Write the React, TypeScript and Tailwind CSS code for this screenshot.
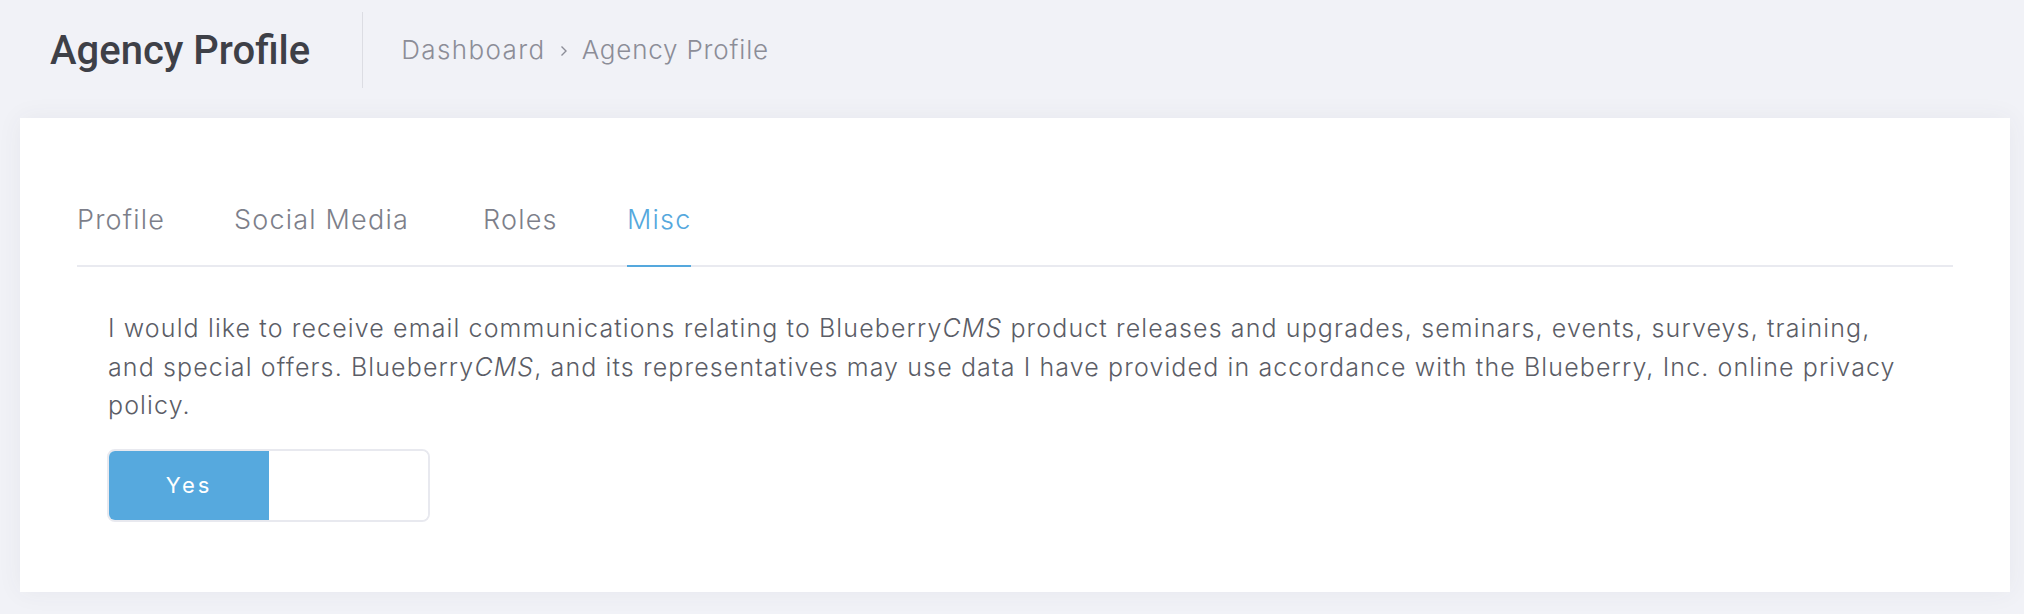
import React from "react";

const poppins = { fontFamily: "Inter, 'Open Sans', sans-serif" } as const;

export default function App() {
  return (
    <div className="min-h-[614px] w-[2024px] bg-[#f1f2f7] overflow-hidden" style={poppins}>
      <header className="h-[100px] flex items-center pl-[50px]">
        <h1 className="text-[40px] leading-[47px] font-medium text-[#3e4047]" style={{ fontFamily: "Roboto, 'Liberation Sans', sans-serif" }}>
          Agency Profile
        </h1>
        <div className="ml-[52px] w-px h-[76px] bg-[#dcdde3]" />
        <nav className="ml-[38px] flex items-center text-[26px] leading-[32px] font-light text-[#8c8d97] tracking-[0.8px]">
          <span className="tracking-[1.4px]">Dashboard</span>
          <svg className="mx-[14px] mt-[2px]" width="8" height="12" viewBox="0 0 8 12" fill="none">
            <path d="M1.5 1.5 L6 6 L1.5 10.5" stroke="#8c8d97" strokeWidth="1.4" />
          </svg>
          <span>Agency Profile</span>
        </nav>
      </header>
      <main className="ml-[20px] mt-[18px] w-[1990px] h-[474px] bg-white shadow-[0_0_24px_rgba(60,64,90,0.06)] pt-[84px] px-[57px]">
        <div className="flex border-b-2 border-[#e9eaf0] text-[27px] leading-[36px] font-light text-[#7d7f8a] tracking-[1.2px]">
          <div className="w-[157px] pb-[27px]">Profile</div>
          <div className="w-[249px] pb-[27px]">Social Media</div>
          <div className="w-[144px] pb-[27px]">Roles</div>
          <div className="pb-[27px] -mb-[2px] border-b-2 border-[#55a8dd] text-[#55a8dd]">Misc</div>
        </div>
        <p className="mt-[42px] ml-[31px] text-[25px] leading-[38.5px] font-light text-[#5b5d66] tracking-[1.12px]">
          I would like to receive email communications relating to Blueberry<i>CMS</i> product releases and upgrades, seminars, events, surveys, training,
          <br />
          and special offers. Blueberry<i>CMS</i>, and its representatives may use data I have provided in accordance with the Blueberry, Inc. online privacy
          <br />
          policy.
        </p>
        <div className="mt-[24px] ml-[30px] w-[323px] h-[73px] border-2 border-[#e8e9ef] rounded-[8px] overflow-hidden flex">
          <div className="w-[160px] h-full bg-[#56a9de] flex items-center justify-center text-white text-[22px] tracking-[3px] font-normal">
            Yes
          </div>
          <div className="flex-1 bg-white" />
        </div>
      </main>
    </div>
  );
}
